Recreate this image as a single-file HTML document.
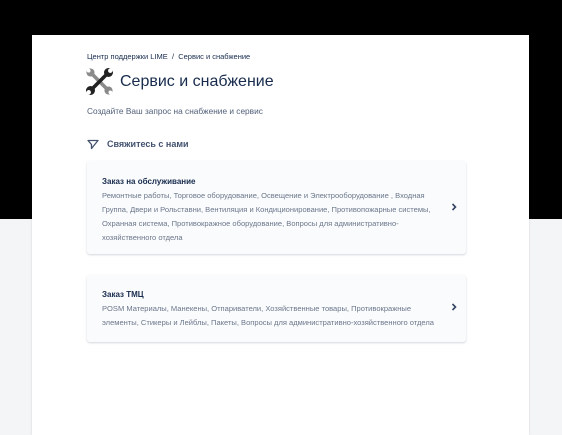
<!DOCTYPE html>
<html><head><meta charset="utf-8"><style>
*{margin:0;padding:0;box-sizing:border-box}
body{width:562px;height:419px;overflow:hidden;background:#f4f5f7;font-family:"Liberation Sans",sans-serif;position:relative}
.top{position:absolute;left:0;top:0;width:562px;height:219px;background:#000}
.panel{position:absolute;left:32px;top:35px;width:497px;height:400px;background:#fff;box-shadow:0 0 2px rgba(0,0,0,.15)}
.bc{position:absolute;left:55px;top:17px;font-size:7.5px;color:#172b4d}
.title{position:absolute;left:88px;top:38px;font-size:16px;color:#172b4d}
.sub{position:absolute;left:55px;top:71px;font-size:8.3px;color:#505f79}
.contact{position:absolute;left:75px;top:104px;font-size:9px;color:#42526e;font-weight:bold}
.card{position:absolute;left:55px;width:379px;background:#fafbfc;border-radius:3px;box-shadow:0 1px 2px rgba(9,30,66,.18)}
.card h3{position:absolute;left:15px;font-size:8px;color:#172b4d;font-weight:bold}
.card p{position:absolute;left:15px;width:330px;font-size:7.55px;line-height:14px;color:#6b778c}
.arr{position:absolute;left:364px}
</style></head><body>
<div class="top"></div>
<div class="panel">
<div class="bc">Центр поддержки LIME &nbsp;/&nbsp; Сервис и снабжение</div>
<svg style="position:absolute;left:54px;top:33px" width="27" height="27" viewBox="0 0 30 30">
<g stroke-linecap="round">
<line x1="6" y1="6" x2="24" y2="24" stroke="#8a8a8a" stroke-width="4"/>
<circle cx="5" cy="5" r="4.5" fill="#8a8a8a"/><circle cx="25" cy="25" r="4.5" fill="#8a8a8a"/>
<line x1="24" y1="6" x2="6" y2="24" stroke="#222" stroke-width="4"/>
<circle cx="25" cy="5" r="5" fill="#222"/><circle cx="5" cy="25" r="5" fill="#222"/>
<circle cx="27" cy="3" r="2.5" fill="#fff"/><circle cx="3" cy="27" r="2.5" fill="#fff"/>
<circle cx="3" cy="3" r="2" fill="#fff"/><circle cx="27" cy="27" r="2" fill="#fff"/>
</g></svg>
<div class="title">Сервис и снабжение</div>
<div class="sub">Создайте Ваш запрос на снабжение и сервис</div>
<svg style="position:absolute;left:55px;top:104px" width="12" height="11" viewBox="0 0 12 11"><path d="M1 1.5H11L4.5 9.5V5.5Z" fill="none" stroke="#42526e" stroke-width="1.3" stroke-linejoin="round"/></svg>
<div class="contact">Свяжитесь с нами</div>
<div class="card" style="top:126px;height:93px">
<h3 style="top:16px">Заказ на обслуживание</h3>
<p style="top:28px">Ремонтные работы, Торговое оборудование, Освещение и Электрооборудование , Входная Группа, Двери и Рольставни, Вентиляция и Кондиционирование, Противопожарные системы, Охранная система, Противокражное оборудование, Вопросы для административно-хозяйственного отдела</p>
<svg class="arr" style="top:42px" width="6" height="8" viewBox="0 0 6 8"><path d="M1.5 1L4.5 4L1.5 7" fill="none" stroke="#344563" stroke-width="1.6"/></svg>
</div>
<div class="card" style="top:240px;height:67px">
<h3 style="top:15px">Заказ ТМЦ</h3>
<p style="top:27px;width:342px">POSM Материалы, Манекены, Отпариватели, Хозяйственные товары, Противокражные элементы, Стикеры и Лейблы, Пакеты, Вопросы для административно-хозяйственного отдела</p>
<svg class="arr" style="top:28px" width="6" height="8" viewBox="0 0 6 8"><path d="M1.5 1L4.5 4L1.5 7" fill="none" stroke="#344563" stroke-width="1.6"/></svg>
</div>
</div>
</body></html>
